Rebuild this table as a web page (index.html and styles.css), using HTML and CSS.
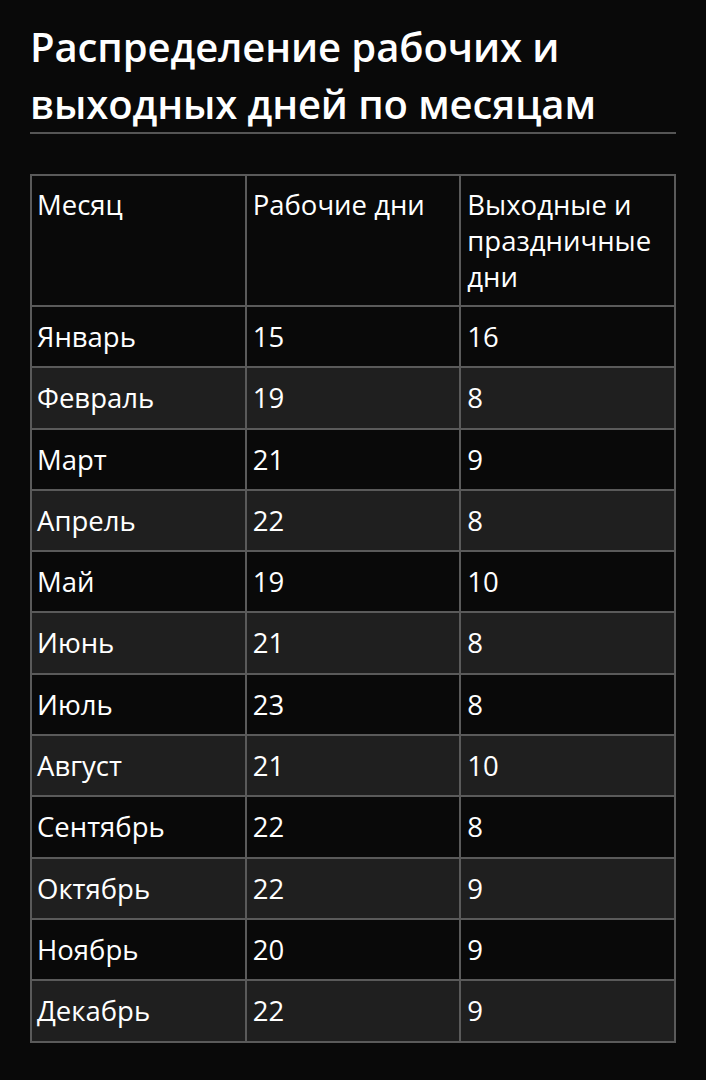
FILE: index.html
```html
<!DOCTYPE html>
<html lang="ru">
<head>
<meta charset="utf-8">
<title>Распределение рабочих и выходных дней по месяцам</title>
<link rel="stylesheet" href="styles.css">
</head>
<body>
<main class="page">
  <h1 class="title">Распределение рабочих и выходных дней по месяцам</h1>
  <table class="days">
    <thead>
      <tr><th>Месяц</th><th>Рабочие дни</th><th>Выходные и праздничные дни</th></tr>
    </thead>
    <tbody>
      <tr><td>Январь</td><td>15</td><td>16</td></tr>
      <tr><td>Февраль</td><td>19</td><td>8</td></tr>
      <tr><td>Март</td><td>21</td><td>9</td></tr>
      <tr><td>Апрель</td><td>22</td><td>8</td></tr>
      <tr><td>Май</td><td>19</td><td>10</td></tr>
      <tr><td>Июнь</td><td>21</td><td>8</td></tr>
      <tr><td>Июль</td><td>23</td><td>8</td></tr>
      <tr><td>Август</td><td>21</td><td>10</td></tr>
      <tr><td>Сентябрь</td><td>22</td><td>8</td></tr>
      <tr><td>Октябрь</td><td>22</td><td>9</td></tr>
      <tr><td>Ноябрь</td><td>20</td><td>9</td></tr>
      <tr><td>Декабрь</td><td>22</td><td>9</td></tr>
    </tbody>
  </table>
</main>
</body>
</html>
```
FILE: styles.css
```css
html, body {
  margin: 0;
  padding: 0;
  background: #090909;
  color: #ffffff;
  font-family: "Open Sans", "Noto Sans", sans-serif;
}

.page {
  padding: 18px 30px 30px;
}

.title {
  margin: 0;
  font-size: 40px;
  line-height: 57px;
  font-weight: 600;
  letter-spacing: -0.1px;
  border-bottom: 2px solid #555555;
}

.days {
  margin-top: 40px;
  width: 100%;
  table-layout: fixed;
  border-collapse: collapse;
  border: 2px solid #5a5a5a;
  font-size: 27.5px;
  line-height: 36px;
}

.days th,
.days td {
  border: 2px solid #5a5a5a;
  text-align: left;
  vertical-align: top;
  font-weight: 400;
  padding: 12px 6px 11.3px;
}

.days th {
  padding: 11px 6px 10px;
}

.days td:first-child,
.days th:first-child {
  padding-left: 5px;
}

.days tbody tr:nth-child(even) {
  background: #1f1f1f;
}
```
